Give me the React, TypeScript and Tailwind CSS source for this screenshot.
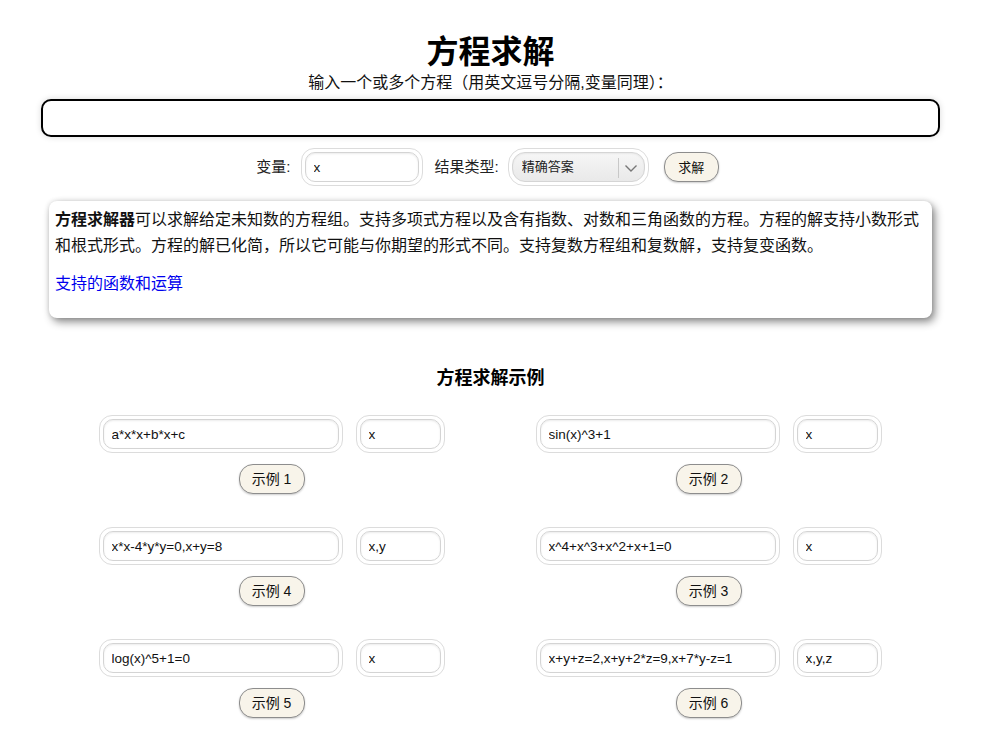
import React from "react";

const examples = [
  { eq: "a*x*x+b*x+c", vars: "x", label: "示例 1" },
  { eq: "sin(x)^3+1", vars: "x", label: "示例 2" },
  { eq: "x*x-4*y*y=0,x+y=8", vars: "x,y", label: "示例 4" },
  { eq: "x^4+x^3+x^2+x+1=0", vars: "x", label: "示例 3" },
  { eq: "log(x)^5+1=0", vars: "x", label: "示例 5" },
  { eq: "x+y+z=2,x+y+2*z=9,x+7*y-z=1", vars: "x,y,z", label: "示例 6" },
];

function RingInput({ value, width }: { value: string; width: string }) {
  return (
    <div className={`${width} h-[38px] rounded-[13px] border border-[#dcdcdc] bg-white p-[3px]`}>
      <input
        readOnly
        value={value}
        className="w-full h-full rounded-[10px] border border-[#d4d4d4] shadow-[inset_0_1px_2px_rgba(0,0,0,0.08)] px-[8px] text-[13.5px] text-[#111] outline-none"
      />
    </div>
  );
}

function PillButton({ children, w }: { children: React.ReactNode; w: string }) {
  return (
    <button className={`${w} h-[30px] rounded-[14px] border border-[#8d8d8d] bg-[#f8f4ea] shadow-[0_1px_2px_rgba(0,0,0,0.2)] text-[#111]`}>
      {children}
    </button>
  );
}

export default function App() {
  return (
    <div className="w-[981px] min-h-screen bg-white text-black font-['Liberation_Sans','Noto_Sans_CJK_SC',sans-serif]">
      {/* header */}
      <h1 className="mt-[29px] text-center text-[32px] leading-[40px] font-bold font-['Noto_Sans_CJK_SC',sans-serif]">
        方程求解
      </h1>
      <p className="mt-[4px] text-center text-[16px] leading-[20px] text-[#111]">
        输入一个或多个方程（用英文逗号分隔,变量同理）：
      </p>

      <div className="mt-[6px] ml-[41px] w-[899px] h-[38px] rounded-[10px] border-2 border-black bg-white shadow-[0_0_6px_rgba(0,0,0,0.15)]">
        <input className="w-full h-full bg-transparent px-3 outline-none text-[15px]" />
      </div>

      {/* controls */}
      <div className="mt-[11px] flex items-center justify-center pr-[6px]">
        <span className="text-[15px] text-[#222]">变量:</span>
        <div className="ml-[10px]">
          <RingInput value="x" width="w-[122px]" />
        </div>
        <span className="ml-[12px] text-[15px] text-[#222]">结果类型:</span>
        <div className="ml-[9px] w-[141px] h-[38px] rounded-[16px] border border-[#dcdcdc] bg-white p-[3px]">
          <div className="relative w-full h-full rounded-[13px] border border-[#d5d5d5] bg-gradient-to-b from-[#f6f6f6] to-[#e9e9e9] shadow-[inset_0_1px_2px_rgba(0,0,0,0.06)]">
            <select className="appearance-none w-full h-full bg-transparent pl-[9px] pr-[30px] text-[13px] text-[#222] outline-none">
              <option>精确答案</option>
              <option>小数答案</option>
            </select>
            <div className="pointer-events-none absolute right-[25px] top-[5px] h-[20px] w-px bg-[#c8c8c8]" />
            <svg className="pointer-events-none absolute right-[6px] top-[9px]" width="14" height="12" viewBox="0 0 14 12">
              <path d="M1.5 3.5 L7 9 L12.5 3.5" fill="none" stroke="#777" strokeWidth="1.4" />
            </svg>
          </div>
        </div>
        <div className="ml-[15px]">
          <PillButton w="w-[55px]">
            <span className="text-[13px]">求解</span>
          </PillButton>
        </div>
      </div>

      {/* info card */}
      <div className="mt-[15px] ml-[49px] w-[883px] rounded-[8px] bg-white px-[6px] pt-[6px] pb-[21px] shadow-[3px_4px_8px_rgba(0,0,0,0.45),0_0_5px_rgba(0,0,0,0.12)]">
        <p className="text-[16px] leading-[26px] text-[#111]">
          <b>方程求解器</b>
          可以求解给定未知数的方程组。支持多项式方程以及含有指数、对数和三角函数的方程。方程的解支持小数形式和根式形式。方程的解已化简，所以它可能与你期望的形式不同。支持复数方程组和复数解，支持复变函数。
        </p>
        <a href="#" className="mt-[12px] block text-[16px] leading-[26px] text-[#0000ee]">
          支持的函数和运算
        </a>
      </div>

      {/* examples */}
      <h2 className="mt-[46px] text-center text-[18px] leading-[24px] font-bold font-['Noto_Sans_CJK_SC',sans-serif]">
        方程求解示例
      </h2>

      <div className="mt-[27px] ml-[53px] w-[874px] grid grid-cols-2 gap-y-[33px]">
        {examples.map((ex) => (
          <div key={ex.label} className="flex flex-col items-center">
            <div className="flex gap-[13px]">
              <RingInput value={ex.eq} width="w-[244px]" />
              <RingInput value={ex.vars} width="w-[89px]" />
            </div>
            <div className="mt-[11px]">
              <PillButton w="w-[66px]">
                <span className="text-[14px]">{ex.label}</span>
              </PillButton>
            </div>
          </div>
        ))}
      </div>
    </div>
  );
}
